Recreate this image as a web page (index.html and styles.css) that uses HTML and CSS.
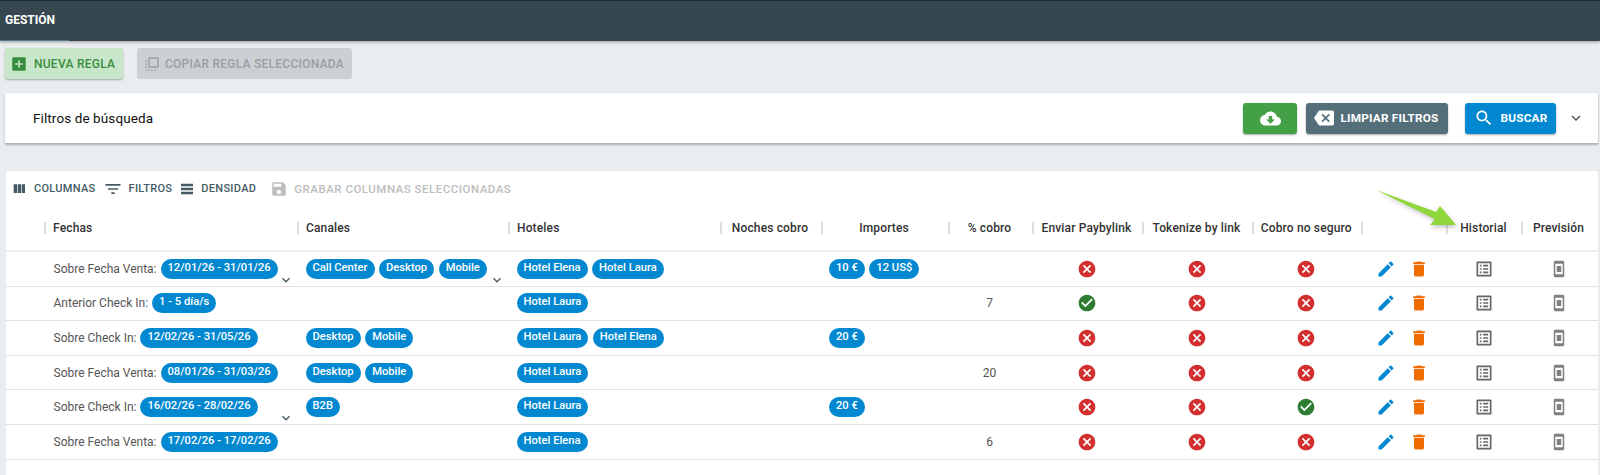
FILE: index.html
```html
<!DOCTYPE html>
<html lang="es">
<head>
<meta charset="utf-8">
<title>Gestión</title>
<link rel="stylesheet" href="styles.css">
</head>
<body>
<svg class="defs" aria-hidden="true">
  <symbol id="i-add" viewBox="0 0 24 24"><path d="M19 3H5c-1.11 0-2 .9-2 2v14c0 1.1.89 2 2 2h14c1.1 0 2-.9 2-2V5c0-1.1-.89-2-2-2zm-2 10h-4v4h-2v-4H7v-2h4V7h2v4h4v2z"/></symbol>
  <symbol id="i-copy" viewBox="0 0 24 24"><path d="M3 13h2v-2H3v2zm0 4h2v-2H3v2zm2 4v-2H3c0 1.1.89 2 2 2zM3 9h2V7H3v2zm12 12h2v-2h-2v2zm4-18H9c-1.11 0-2 .9-2 2v10c0 1.1.89 2 2 2h10c1.1 0 2-.9 2-2V5c0-1.1-.9-2-2-2zm0 12H9V5h10v10zm-8 6h2v-2h-2v2zm-4 0h2v-2H7v2z"/></symbol>
  <symbol id="i-cols" viewBox="0 0 24 24"><path d="M10 18h5V5h-5v13zm-6 0h5V5H4v13zM16 5v13h5V5h-5z"/></symbol>
  <symbol id="i-filter" viewBox="0 0 24 24"><path d="M10 18h4v-2h-4v2zM3 6v2h18V6H3zm3 7h12v-2H6v2z"/></symbol>
  <symbol id="i-density" viewBox="0 0 24 24"><path d="M21 8H3V4h18v4zm0 2H3v4h18v-4zm0 6H3v4h18v-4z"/></symbol>
  <symbol id="i-save" viewBox="0 0 24 24"><path d="M17 3H5c-1.11 0-2 .9-2 2v14c0 1.1.89 2 2 2h14c1.1 0 2-.9 2-2V7l-4-4zm-5 16c-1.66 0-3-1.34-3-3s1.34-3 3-3 3 1.34 3 3-1.34 3-3 3zm3-10H5V5h10v4z"/></symbol>
  <symbol id="i-cloud" viewBox="0 0 24 24"><path d="M19.35 10.04C18.67 6.59 15.64 4 12 4 9.11 4 6.6 5.64 5.35 8.04 2.34 8.36 0 10.91 0 14c0 3.31 2.69 6 6 6h13c2.76 0 5-2.24 5-5 0-2.64-2.05-4.78-4.65-4.96zM17 13l-5 5-5-5h3V9h4v4h3z"/></symbol>
  <symbol id="i-back" viewBox="0 0 24 24"><path d="M22 3H7c-.69 0-1.23.35-1.59.88L0 12l5.41 8.11c.36.53.9.89 1.59.89h15c1.1 0 2-.9 2-2V5c0-1.1-.9-2-2-2zm-3 12.59L17.59 17 14 13.41 10.41 17 9 15.59 12.59 12 9 8.41 10.41 7 14 10.59 17.59 7 19 8.41 15.41 12 19 15.59z"/></symbol>
  <symbol id="i-search" viewBox="0 0 24 24"><path d="M15.5 14h-.79l-.28-.27C15.41 12.59 16 11.11 16 9.5 16 5.91 13.09 3 9.5 3S3 5.91 3 9.5 5.91 16 9.5 16c1.61 0 3.09-.59 4.23-1.57l.27.28v.79l5 4.99L20.49 19l-4.99-5zm-6 0C7.01 14 5 11.99 5 9.5S7.01 5 9.5 5 14 7.01 14 9.5 11.99 14 9.5 14z"/></symbol>
  <symbol id="i-more" viewBox="0 0 24 24"><path d="M16.59 8.59 12 13.17 7.41 8.59 6 10l6 6 6-6z"/></symbol>
  <symbol id="i-no" viewBox="0 0 24 24"><path d="M12 2C6.47 2 2 6.47 2 12s4.47 10 10 10 10-4.47 10-10S17.53 2 12 2zm5 13.59L15.59 17 12 13.41 8.41 17 7 15.59 10.59 12 7 8.41 8.41 7 12 10.59 15.59 7 17 8.41 13.41 12 17 15.59z"/></symbol>
  <symbol id="i-yes" viewBox="0 0 24 24"><path d="M12 2C6.48 2 2 6.48 2 12s4.48 10 10 10 10-4.48 10-10S17.52 2 12 2zm-2 15-5-5 1.41-1.41L10 14.17l7.59-7.59L19 8l-9 9z"/></symbol>
  <symbol id="i-edit" viewBox="0 0 24 24"><path d="M3 17.25V21h3.75L17.81 9.94l-3.75-3.75L3 17.25zM20.71 7.04c.39-.39.39-1.02 0-1.41l-2.34-2.34a.9959.9959 0 0 0-1.41 0l-1.83 1.83 3.75 3.75 1.83-1.83z"/></symbol>
  <symbol id="i-del" viewBox="0 0 24 24"><path d="M6 19c0 1.1.9 2 2 2h8c1.1 0 2-.9 2-2V7H6v12zM19 4h-3.5l-1-1h-5l-1 1H5v2h14V4z"/></symbol>
  <symbol id="i-list" viewBox="0 0 24 24"><path d="M19 5v14H5V5h14m1.1-2H3.9c-.5 0-.9.4-.9.9v16.2c0 .4.4.9.9.9h16.2c.4 0 .9-.5.9-.9V3.9c0-.5-.5-.9-.9-.9zM11 7h6v2h-6V7zm0 4h6v2h-6v-2zm0 4h6v2h-6zM7 7h2v2H7zm0 4h2v2H7zm0 4h2v2H7z"/></symbol>
  <symbol id="i-phone" viewBox="0 0 24 24"><path d="M17 1.01 7 1c-1.1 0-2 .9-2 2v18c0 1.1.9 2 2 2h10c1.1 0 2-.9 2-2V3c0-1.1-.9-1.99-2-1.99zM17 19H7V5h10v14z"/><path d="M9 8h6v8H9z"/></symbol>
</svg>

<header class="topbar"><div class="tab">GESTIÓN</div></header>

<div class="actions">
  <button class="btn btn-new"><svg class="ic18"><use href="#i-add"/></svg>NUEVA REGLA</button>
  <button class="btn btn-copy"><svg class="ic18"><use href="#i-copy"/></svg>COPIAR REGLA SELECCIONADA</button>
</div>

<section class="filters">
  <h2 class="filters-title">Filtros de búsqueda</h2>
  <div class="filters-actions">
    <button class="fbtn fbtn-green"><svg class="ic21"><use href="#i-cloud"/></svg></button>
    <button class="fbtn fbtn-grey"><svg class="ic20"><use href="#i-back"/></svg>LIMPIAR FILTROS</button>
    <button class="fbtn fbtn-blue"><svg class="ic20"><use href="#i-search"/></svg>BUSCAR</button>
    <svg class="ic18 filters-more"><use href="#i-more"/></svg>
  </div>
</section>

<main class="card">
  <div class="toolbar">
    <span class="tool tool-cols"><svg class="ic16"><use href="#i-cols"/></svg>COLUMNAS</span>
    <span class="tool tool-filter"><svg class="ic20"><use href="#i-filter"/></svg>FILTROS</span>
    <span class="tool tool-density"><svg class="ic16"><use href="#i-density"/></svg>DENSIDAD</span>
    <span class="tool tool-save"><svg class="ic18"><use href="#i-save"/></svg>GRABAR COLUMNAS SELECCIONADAS</span>
  </div>

  <div class="row head">
    <div class="spacer"></div>
    <div class="hc">Fechas</div><div class="hc">Canales</div><div class="hc">Hoteles</div>
    <div class="hc c">Noches cobro</div><div class="hc c">Importes</div><div class="hc c">% cobro</div>
    <div class="hc c">Enviar Paybylink</div><div class="hc c">Tokenize by link</div><div class="hc c">Cobro no seguro</div>
    <div class="hc c"></div><div class="hc c">Historial</div><div class="hc c">Previsión</div>
  </div>

  <div class="row">
    <div class="spacer"></div>
    <div class="cell"><span class="lbl">Sobre Fecha Venta:</span><span class="pill">12/01/26 - 31/01/26</span><svg class="more"><use href="#i-more"/></svg></div>
    <div class="cell"><span class="pill">Call Center</span><span class="pill">Desktop</span><span class="pill">Mobile</span><svg class="more"><use href="#i-more"/></svg></div>
    <div class="cell"><span class="pill">Hotel Elena</span><span class="pill">Hotel Laura</span></div>
    <div class="cell"></div>
    <div class="cell"><span class="pill">10 €</span><span class="pill">12 US$</span></div>
    <div class="cell c"></div>
    <div class="cell c"><svg class="st no"><use href="#i-no"/></svg></div>
    <div class="cell c"><svg class="st no"><use href="#i-no"/></svg></div>
    <div class="cell c"><svg class="st no"><use href="#i-no"/></svg></div>
    <div class="cell c ops"><svg class="st edit"><use href="#i-edit"/></svg><svg class="st del"><use href="#i-del"/></svg></div>
    <div class="cell c"><svg class="st grey"><use href="#i-list"/></svg></div>
    <div class="cell c"><svg class="st phone"><use href="#i-phone"/></svg></div>
  </div>

  <div class="row">
    <div class="spacer"></div>
    <div class="cell"><span class="lbl">Anterior Check In:</span><span class="pill">1 - 5 día/s</span></div>
    <div class="cell"></div>
    <div class="cell"><span class="pill">Hotel Laura</span></div>
    <div class="cell"></div>
    <div class="cell"></div>
    <div class="cell c">7</div>
    <div class="cell c"><svg class="st yes"><use href="#i-yes"/></svg></div>
    <div class="cell c"><svg class="st no"><use href="#i-no"/></svg></div>
    <div class="cell c"><svg class="st no"><use href="#i-no"/></svg></div>
    <div class="cell c ops"><svg class="st edit"><use href="#i-edit"/></svg><svg class="st del"><use href="#i-del"/></svg></div>
    <div class="cell c"><svg class="st grey"><use href="#i-list"/></svg></div>
    <div class="cell c"><svg class="st phone"><use href="#i-phone"/></svg></div>
  </div>

  <div class="row">
    <div class="spacer"></div>
    <div class="cell"><span class="lbl">Sobre Check In:</span><span class="pill">12/02/26 - 31/05/26</span></div>
    <div class="cell"><span class="pill">Desktop</span><span class="pill">Mobile</span></div>
    <div class="cell"><span class="pill">Hotel Laura</span><span class="pill">Hotel Elena</span></div>
    <div class="cell"></div>
    <div class="cell"><span class="pill">20 €</span></div>
    <div class="cell c"></div>
    <div class="cell c"><svg class="st no"><use href="#i-no"/></svg></div>
    <div class="cell c"><svg class="st no"><use href="#i-no"/></svg></div>
    <div class="cell c"><svg class="st no"><use href="#i-no"/></svg></div>
    <div class="cell c ops"><svg class="st edit"><use href="#i-edit"/></svg><svg class="st del"><use href="#i-del"/></svg></div>
    <div class="cell c"><svg class="st grey"><use href="#i-list"/></svg></div>
    <div class="cell c"><svg class="st phone"><use href="#i-phone"/></svg></div>
  </div>

  <div class="row">
    <div class="spacer"></div>
    <div class="cell"><span class="lbl">Sobre Fecha Venta:</span><span class="pill">08/01/26 - 31/03/26</span></div>
    <div class="cell"><span class="pill">Desktop</span><span class="pill">Mobile</span></div>
    <div class="cell"><span class="pill">Hotel Laura</span></div>
    <div class="cell"></div>
    <div class="cell"></div>
    <div class="cell c">20</div>
    <div class="cell c"><svg class="st no"><use href="#i-no"/></svg></div>
    <div class="cell c"><svg class="st no"><use href="#i-no"/></svg></div>
    <div class="cell c"><svg class="st no"><use href="#i-no"/></svg></div>
    <div class="cell c ops"><svg class="st edit"><use href="#i-edit"/></svg><svg class="st del"><use href="#i-del"/></svg></div>
    <div class="cell c"><svg class="st grey"><use href="#i-list"/></svg></div>
    <div class="cell c"><svg class="st phone"><use href="#i-phone"/></svg></div>
  </div>

  <div class="row">
    <div class="spacer"></div>
    <div class="cell"><span class="lbl">Sobre Check In:</span><span class="pill">16/02/26 - 28/02/26</span><svg class="more"><use href="#i-more"/></svg></div>
    <div class="cell"><span class="pill">B2B</span></div>
    <div class="cell"><span class="pill">Hotel Laura</span></div>
    <div class="cell"></div>
    <div class="cell"><span class="pill">20 €</span></div>
    <div class="cell c"></div>
    <div class="cell c"><svg class="st no"><use href="#i-no"/></svg></div>
    <div class="cell c"><svg class="st no"><use href="#i-no"/></svg></div>
    <div class="cell c"><svg class="st yes"><use href="#i-yes"/></svg></div>
    <div class="cell c ops"><svg class="st edit"><use href="#i-edit"/></svg><svg class="st del"><use href="#i-del"/></svg></div>
    <div class="cell c"><svg class="st grey"><use href="#i-list"/></svg></div>
    <div class="cell c"><svg class="st phone"><use href="#i-phone"/></svg></div>
  </div>

  <div class="row">
    <div class="spacer"></div>
    <div class="cell"><span class="lbl">Sobre Fecha Venta:</span><span class="pill">17/02/26 - 17/02/26</span></div>
    <div class="cell"></div>
    <div class="cell"><span class="pill">Hotel Elena</span></div>
    <div class="cell"></div>
    <div class="cell"></div>
    <div class="cell c">6</div>
    <div class="cell c"><svg class="st no"><use href="#i-no"/></svg></div>
    <div class="cell c"><svg class="st no"><use href="#i-no"/></svg></div>
    <div class="cell c"><svg class="st no"><use href="#i-no"/></svg></div>
    <div class="cell c ops"><svg class="st edit"><use href="#i-edit"/></svg><svg class="st del"><use href="#i-del"/></svg></div>
    <div class="cell c"><svg class="st grey"><use href="#i-list"/></svg></div>
    <div class="cell c"><svg class="st phone"><use href="#i-phone"/></svg></div>
  </div>
</main>

<svg class="arrow" viewBox="0 0 90 44" aria-hidden="true">
  <polygon points="0,2 60,24 64,18 80,37 54,37 59,31"/>
</svg>
</body>
</html>
```

FILE: styles.css
```css
* { box-sizing: border-box; }
html, body { margin: 0; height: 475px; overflow: hidden; }
body { background: #e9edf0; font-family: Roboto, "Liberation Sans", sans-serif; color: #333; position: relative; }
svg { fill: currentColor; flex: none; }
.defs { display: none; }
.ic16 { width: 16px; height: 16px; }
.ic18 { width: 18px; height: 18px; }
.ic20 { width: 20px; height: 20px; }
.ic21 { width: 21px; height: 21px; }

.topbar { height: 41px; background: #37474f; border-top: 1px solid #1f2c33; box-shadow: 0 1px 3px rgba(0,0,0,.35); }
.tab { width: 69px; height: 40px; padding-left: 5px; line-height: 38px; color: #fff; font-size: 12px; font-weight: 700; border-bottom: 1px solid #5b7a8c; }

.actions { display: flex; gap: 14px; padding: 7px 0 0 5px; height: 52px; }
.btn { display: flex; align-items: center; height: 31px; border: 0; border-radius: 3px; font: 500 12px Roboto, sans-serif; letter-spacing: .25px; padding: 0; }
.btn-new { width: 118px; padding-left: 5px; gap: 6px; background: #c8e6c9; color: #388e3c; box-shadow: 0 1px 2px rgba(0,0,0,.3); }
.btn-copy { width: 215px; padding-left: 6px; gap: 4px; background: #ccd0d3; color: #9a9ea2; }

.filters { display: flex; align-items: center; justify-content: space-between; height: 51px; margin: 0 2px 0 5px; background: #fff; padding-left: 28px; border-bottom: 1px solid #b5b5b5; box-shadow: 0 1px 2px rgba(0,0,0,.25); }
.filters-title { margin: 0; font-size: 13.5px; font-weight: 400; color: #111; letter-spacing: .1px; }
.filters-actions { display: flex; align-items: center; }
.fbtn { display: flex; align-items: center; height: 31px; padding: 0; border: 0; border-radius: 3px; color: #fff; font: 700 11.8px Roboto, sans-serif; letter-spacing: .2px; box-shadow: 0 1px 2px rgba(0,0,0,.35); }
.fbtn-green { width: 54px; justify-content: center; background: #43a047; margin-right: 9px; }
.fbtn-grey { width: 142px; background: #546e7a; padding-left: 8px; gap: 6.5px; margin-right: 17px; }
.fbtn-blue { width: 91px; background: #0288d1; padding-left: 8.5px; gap: 7px; margin-right: 11px; }
.filters-more { color: #555; margin-right: 13px; }

.card { margin: 27px 2px 0 6px; background: #fff; border-radius: 3px 3px 0 0; height: 304px; }
.toolbar { display: flex; align-items: center; height: 35px; font-size: 11px; font-weight: 500; letter-spacing: .3px; color: #455a64; }
.tool { display: flex; align-items: center; }
.tool-cols { margin-left: 5px; gap: 7px; }
.tool-filter { margin-left: 7px; gap: 6px; }
.tool-density { margin-left: 7px; gap: 6px; }
.tool-save { margin-left: 14px; gap: 6px; color: #bdbdbd; font-size: 11.5px; letter-spacing: .5px; }

.row { display: grid; grid-template-columns: 38px 253px 211px 211.5px 101px 127px 84px 110px 110px 109.5px 85px 75px 75px; height: 34.6px; border-bottom: 1px solid #e2e2e2; }
.head { height: 46px; border-bottom-width: 2px; border-bottom-color: #eee; }
.hc { display: flex; align-items: center; padding-left: 9px; font-size: 12px; font-weight: 500; color: #333; letter-spacing: .15px; background: linear-gradient(#ddd, #ddd) left center / 2px 12px no-repeat; }
.hc.c { justify-content: center; padding-left: 0; }
.cell { display: flex; align-items: center; padding: 0 7px 0 8.5px; font-size: 12px; color: #555; min-width: 0; }
.cell.c { justify-content: center; padding: 0; }
.lbl { margin: 0 4px 0 1px; white-space: nowrap; }
.pill { height: 20px; line-height: 18.5px; margin-right: 4.5px; padding: 0 7px; border-radius: 10px; background: #0288d1; color: #fff; font-size: 11.2px; font-weight: 500; white-space: nowrap; }
.pill:has(+ .more) { margin-right: 0; }
.more { width: 16px; height: 16px; margin: 0 -4px -2px auto; align-self: flex-end; color: #455a64; }
.st { width: 20px; height: 20px; }
.no { color: #d32f2f; }
.yes { color: #2e7d32; }
.edit { color: #0288d1; }
.del { color: #ef6c00; }
.grey { color: #666; }
.phone { color: #808080; width: 18px; height: 18px; }
.cell.ops { gap: 13px; padding-right: 1.5px; }

.arrow { position: absolute; left: 1376px; top: 188px; width: 90px; height: 44px; fill: #8fd63a; filter: drop-shadow(1px 2px 2px rgba(0,0,0,.25)); }
```
